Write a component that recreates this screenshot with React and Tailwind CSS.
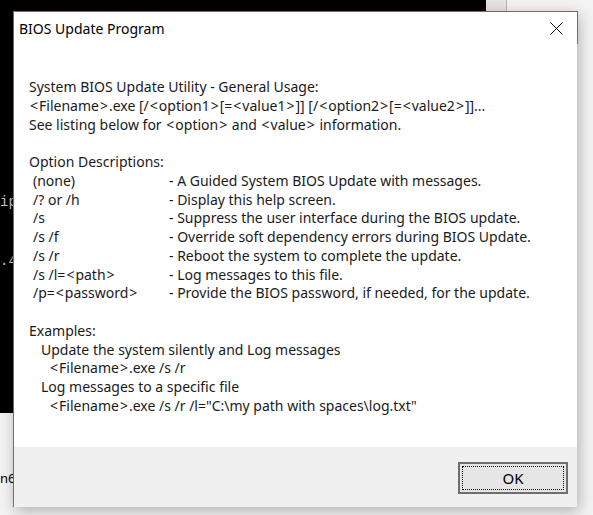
import React from "react";

function T({ s }) {
  const parts = s.split(/([<>])/);
  return (
    <>
      {parts.map((p, i) =>
        p === "<" || p === ">" ? (
          <span key={i} className="mx-[1px]">{p}</span>
        ) : (
          <React.Fragment key={i}>{p}</React.Fragment>
        )
      )}
    </>
  );
}

const options = [
  ["(none)", "- A Guided System BIOS Update with messages."],
  ["/? or /h", "- Display this help screen."],
  ["/s", "- Suppress the user interface during the BIOS update."],
  ["/s /f", "- Override soft dependency errors during BIOS Update."],
  ["/s /r", "- Reboot the system to complete the update."],
  ["/s /l=<path>", "- Log messages to this file."],
  ["/p=<password>", "- Provide the BIOS password, if needed, for the update."],
];

export default function App() {
  return (
    <div className="relative w-[593px] h-[515px] overflow-hidden bg-[#f3f3f3]" style={{ fontFamily: '"Noto Sans", "Open Sans", sans-serif' }}>
      {/* background console window */}
      <div className="absolute left-0 top-0 w-[486px] h-[413px] bg-black">
        <div className="absolute left-0 top-[193px] text-[#c0c0c0] text-[14px] leading-[18px]" style={{ fontFamily: '"Liberation Mono", monospace' }}>ip</div>
        <div className="absolute left-0 top-[252px] text-[#c0c0c0] text-[14px] leading-[18px]" style={{ fontFamily: '"Liberation Mono", monospace' }}>.4</div>
      </div>
      <div className="absolute left-[486px] top-0 w-[21px] h-[40px] bg-[#e4e4e4] border-r border-[#b5b5b5]" />
      <div className="absolute left-0 top-[469px] text-[13px] leading-[18px] text-black">n64</div>

      {/* dialog */}
      <div className="absolute left-[13px] top-[11px] w-[564px] h-[496px] bg-white flex flex-col border-l border-t border-[#1883d7] shadow-[2px_4px_14px_rgba(0,0,0,0.28)]">
        <div className="absolute right-[-1px] top-[-1px] w-px h-[33px] bg-[#1883d7]" />
        <div className="h-[32px] flex items-center justify-between pl-[5px] pr-[14px] shrink-0">
          <span className="text-[14px] text-black">BIOS Update Program</span>
          <svg width="13" height="13" viewBox="0 0 13 13" className="mt-[1px]">
            <path d="M0.5 0.5 L12.5 12.5 M12.5 0.5 L0.5 12.5" stroke="#000" strokeWidth="1" fill="none" />
          </svg>
        </div>
        <div className="flex-1 pl-[15px] pt-[34px] text-[14px] leading-[18.75px] text-[#1a1a1a]">
          <div>System BIOS Update Utility - General Usage:</div>
          <div><T s="<Filename>.exe [/<option1>[=<value1>]] [/<option2>[=<value2>]]..." /></div>
          <div><T s="See listing below for <option> and <value> information." /></div>
          <div className="h-[18.75px]" />
          <div>Option Descriptions:</div>
          <div className="grid grid-cols-[136px_1fr] pl-[4px]">
            {options.map(([a, b]) => (
              <React.Fragment key={a}>
                <div><T s={a} /></div>
                <div>{b}</div>
              </React.Fragment>
            ))}
          </div>
          <div className="h-[18.75px]" />
          <div>Examples:</div>
          <div className="pl-[12px]">Update the system silently and Log messages</div>
          <div className="pl-[20px]"><T s="<Filename>.exe /s /r" /></div>
          <div className="pl-[12px]">Log messages to a specific file</div>
          <div className="pl-[20px]"><T s={'<Filename>.exe /s /r /l="C:\\my path with spaces\\log.txt"'} /></div>
        </div>
        <div className="h-[60px] shrink-0 bg-[#f0f0f0] flex justify-end items-start pt-[15px] pr-[9px]">
          <div className="w-[110px] h-[32px] border-2 border-[#6f6f6f] bg-[#e6e6e6] p-[2px]">
            <div className="w-full h-full border border-dotted border-black flex items-center justify-center text-[15px] text-black">OK</div>
          </div>
        </div>
      </div>
    </div>
  );
}
